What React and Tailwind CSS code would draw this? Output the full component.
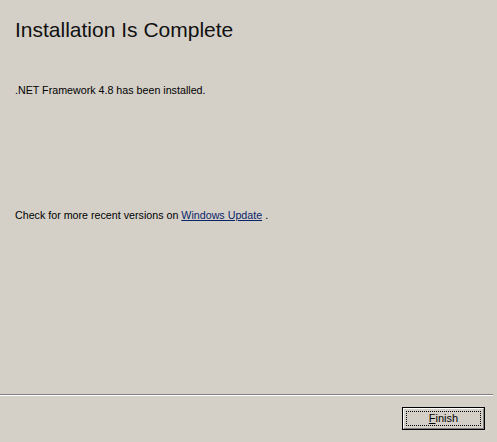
export default function App() {
  return (
    <div
      className="w-[497px] h-[442px] bg-[#d4d0c8] flex flex-col text-black overflow-hidden"
      style={{ fontFamily: '"Liberation Sans", Arial, sans-serif' }}
    >
      {/* Content */}
      <div className="flex-1 px-[15px]">
        <h1 className="mt-[17px] text-[21px] leading-[25px] text-[#111]">
          Installation Is Complete
        </h1>
        <p className="mt-[42px] text-[10.7px] leading-[13px]">
          .NET Framework 4.8 has been installed.
        </p>
        <p className="mt-[112px] text-[10.7px] leading-[13px]">
          Check for more recent versions on{" "}
          <a href="#" className="text-[#0a246a] underline">
            Windows Update
          </a>{" "}
          .
        </p>
      </div>

      {/* Separator */}
      <div className="mr-[4px] h-[2px] border-t border-t-[#808080] border-b border-b-white" />

      {/* Footer */}
      <div className="h-[46px] flex justify-end items-start pt-[11px] pr-[12px]">
        <button className="w-[83px] h-[23px] border border-black bg-[#d4d0c8] text-[11px] p-0">
          <span className="flex h-full w-full border-t border-l border-t-white border-l-white border-b border-r border-b-[#808080] border-r-[#808080]">
            <span className="m-[2px] flex flex-1 items-center justify-center border border-dotted border-black">
              <span>
                <span className="underline">F</span>inish
              </span>
            </span>
          </span>
        </button>
      </div>
    </div>
  );
}
